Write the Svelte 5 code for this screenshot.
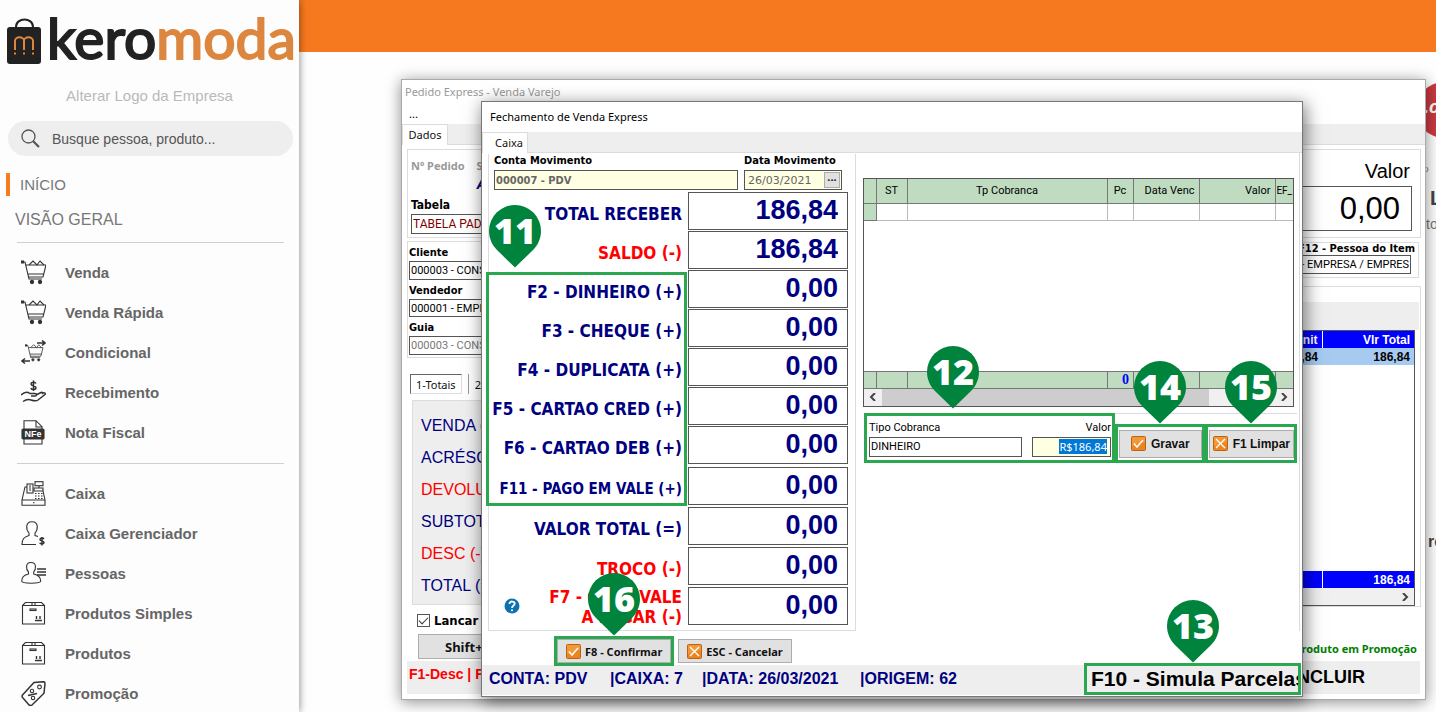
<script>
	const cart = '<path d="M0 2h4l4 17h13M5 5h20l-3 12H8M7 14h16"/><path d="M8 5l4-4 4 4 3-4 4 4"/><path d="M0 2h3" stroke-width="3"/><circle cx="11" cy="22" r="1.6" fill="#333"/><circle cx="19" cy="22" r="1.6" fill="#333"/>';
	const box = '<path d="M1.5 4.5h22V23h-22zM1.5 4.500l3-3h16l3 3M11 1.500v3M14 1.500v3"/><rect x="9" y="8" width="6" height="1.500"/><path d="M14 19.500h7M15.500 18v-3M19 18v-3" stroke-width="1.400"/>';
	const icons = {
		cart,
		swap: '<g transform="translate(4 4) scale(.72)">' + cart + '</g><path d="M16 3h8M21 .5L24 3l-3 2.500M9 21H1M4 18.500L1 21l3 2.500" stroke-width="1.600"/>',
		hand: '<path d="M15 3.500c-1-2-5-1.500-5 .6 0 2.400 5 1.200 5 3.700 0 2.200-4 2.500-5.200.3M12.500.5v10.500" stroke-width="1.500"/><path d="M0 15c4-4 7-3 9-1.500h5c2 0 2 2.500 0 2.500h-4M15 15l5-2.500c1.500-.6 2 .7 1 1.500M21 13.500c2-1.500 4-.5 3 1L17 20c-2 1.500-4 1-7 0-3-1-5-.5-8 1.500" stroke-width="1.500"/>',
		nfe: '<path d="M3 10V.7h12l6 6V10M15 1v6h6M3 19v5h18v-5"/><rect x="1" y="9" width="22" height="10" rx="1" fill="#333"/><text x="12" y="17" font-family="Liberation Sans, sans-serif" font-size="9" font-weight="bold" text-anchor="middle" fill="#fff" stroke="none">NFe</text>',
		till: '<path d="M1 19l3-13h2M22 10l2 9M1 19h23v5.300H1zM12 21.700h1.500"/><rect x="6" y="3" width="6" height="9"/><path d="M8 5h2M8 7h2M8 9h2"/><rect x="14" y=".7" width="8" height="4"/><path d="M18 5v2M13 7h9v3h-9z"/><path d="M14 12.500h9M14 15h9M14 17.500h9" stroke-dasharray="1.500 1.500"/>',
		cashier: '<path d="M11 .7c-7 0-6 8-3 11.300v2.500C3 16 1 18 1 23.500h14M11 .7c7 0 6 8 3 11.300v2.500l3 1"/><path d="M23 18c-1-1.500-4-1.200-4 .5 0 2 4 1 4 3 0 1.800-3.500 2-4.300.2M21 16v8.500" stroke-width="1.500"/>',
		people: '<path d="M10 1.500c-6 0-5 7-2.500 9.500v2C3 14 .7 16 .7 20c0 3 19 3 19 0 0-4-2.700-6-7-7v-2C15 8.500 16 1.500 10 1.500z"/><path d="M16 8h9M16 11h9M16 14h9" stroke-width="1.700"/>',
		box,
		tag: '<path d="M1.500 14L13 1.500l9.500-.8c1.200 0 1.500.5 1.500 1.500l-1 10L11 24c-1 .8-2 .6-3 0l-6-7c-1-1-1.200-2-.5-3z" stroke-width="1.500"/><circle cx="18.500" cy="6" r="1.900"/><circle cx="11" cy="10" r="1.700"/><circle cx="12" cy="17" r="1.700"/><path d="M7 14.500l9-2" stroke-width="1.500"/>'
	};

	const sales = [
		{ icon: 'cart', text: 'Venda' },
		{ icon: 'cart', text: 'Venda Rápida' },
		{ icon: 'swap', text: 'Condicional' },
		{ icon: 'hand', text: 'Recebimento' },
		{ icon: 'nfe', text: 'Nota Fiscal' }
	];
	const registers = [
		{ icon: 'till', text: 'Caixa' },
		{ icon: 'cashier', text: 'Caixa Gerenciador' },
		{ icon: 'people', text: 'Pessoas' },
		{ icon: 'box', text: 'Produtos Simples' },
		{ icon: 'box', text: 'Produtos' },
		{ icon: 'tag', text: 'Promoção' }
	];

	// each group is one block of rows in the payment form
	const groups = [
		{
			rows: [
				{ id: 'receber', label: 'TOTAL RECEBER', value: '186,84' },
				{ id: 'saldo', label: 'SALDO (-)', value: '186,84', red: true }
			]
		},
		{
			pin: '11',
			rows: [
				{ id: 'f2', label: 'F2 - DINHEIRO (+)', value: '0,00' },
				{ id: 'f3', label: 'F3 - CHEQUE (+)', value: '0,00' },
				{ id: 'f4', label: 'F4 - DUPLICATA (+)', value: '0,00' },
				{ id: 'f5', label: 'F5 - CARTAO CRED (+)', value: '0,00' },
				{ id: 'f6', label: 'F6 - CARTAO DEB (+)', value: '0,00' },
				{ id: 'f11', label: 'F11 - PAGO EM VALE (+)', value: '0,00', small: true }
			]
		},
		{
			rows: [
				{ id: 'total', label: 'VALOR TOTAL (=)', value: '0,00' },
				{ id: 'troco', label: 'TROCO (-)', value: '0,00', red: true },
				{ id: 'f7', label: 'F7 - GERA VALE A PAGAR (-)', value: '0,00', red: true, help: true }
			]
		}
	];

	const totals = [
		{ text: 'VENDA (+)' },
		{ text: 'ACRÉSCIMO (+)' },
		{ text: 'DEVOLUÇÃO (-)', red: true },
		{ text: 'SUBTOTAL (=)' },
		{ text: 'DESC (-)', red: true },
		{ text: 'TOTAL  (=)' }
	];
</script>

{#snippet pin(number)}
	<svg class="pin" width="52" height="63" viewBox="0 0 52 63">
		<path d="M26 62.500L8 45C3 40 0 33 0 26a26 26 0 0 1 52 0c0 7-3 14-8 19z" fill="#00833c" />
		<text x="26" y="39" text-anchor="middle">{number}</text>
	</svg>
{/snippet}

{#snippet mark(kind)}
	<svg width="15" height="15" viewBox="0 0 15 15">
		<rect x=".5" y=".5" width="14" height="14" rx="1" fill="#ec8420" stroke="#b96412" />
		<path d="M1 1h13v5L1 10z" fill="#f6a54a" opacity=".6" />
		{#if kind == 'ok'}
			<path d="M3 7.500l3 3.500 6-7" fill="none" stroke="#fff" stroke-width="1.500" />
		{:else}
			<path d="M3 3l9 9M12 3l-9 9" fill="none" stroke="#fff" stroke-width="1.300" />
		{/if}
	</svg>
{/snippet}

{#snippet menu(items)}
	<ul class="menu">
		{#each items as item}
			<li>
				<a href="#{item.icon}">
					<svg width="25" height="25" viewBox="0 0 25 25" fill="none" stroke="#333" stroke-width="1.100">{@html icons[item.icon]}</svg>
					{item.text}
				</a>
			</li>
		{/each}
	</ul>
{/snippet}

<div class="page">
	<nav class="sidebar">
		<div class="logo">
			<svg width="35" height="47" viewBox="0 0 35 47">
				<path d="M9 12V9c0-10 17-10 17 0v3" fill="none" stroke="#222" stroke-width="2" />
				<rect x="0" y="9" width="34" height="37" rx="3" fill="#222" />
				<path d="M8 32V23c0-5 9-5 9 0v9M17 23c0-5 9-5 9 0v9" fill="none" stroke="#dc863f" stroke-width="2" />
				<path d="M7 35.500h2M16 35.500h2M25 35.500h2" stroke="#dc863f" stroke-width="2" />
			</svg>
			<span class="brand">kero<b>moda</b></span>
		</div>
		<a class="change" href="#logo">Alterar Logo da Empresa</a>
		<label class="search">
			<svg width="20" height="20" viewBox="0 0 20 20" fill="none" stroke="#555"><circle cx="7.500" cy="7.500" r="6.500" stroke-width="1.300" /><path d="M12 12l6 6" stroke-width="2.200" /></svg>
			<input type="text" placeholder="Busque pessoa, produto..." aria-label="Busque pessoa, produto...">
		</label>
		<a class="home" href="#inicio">INÍCIO</a>
		<h2>VISÃO GERAL</h2>
		{@render menu(sales)}
		{@render menu(registers)}
	</nav>

	<main>
		<div class="topbar"></div>

		<div class="behind">
			<div class="ball"><i>.co</i></div>
			<p class="degree">º</p>
			<p class="big">LO</p>
			<p class="small">tos</p>
			<p class="low">re</p>
		</div>

		<section class="window order">
			<header>Pedido Express - Venda Varejo</header>
			<div class="dots">...</div>
			<div class="tabs"><button>Dados</button></div>
			<div class="order-body">
				<div class="box top-box">
					<div class="col">
						<p class="pedido"><span>Nº Pedido</span><span>Status</span></p>
						<p class="state">ABERTO</p>
						<label for="tabela" class="wide">Tabela</label>
						<input id="tabela" class="maroon" value="TABELA PADRAO">
					</div>
					<div class="col price">
						<label for="valor">Valor</label>
						<input id="valor" value="0,00">
					</div>
				</div>
				<div class="columns">
					<div class="left">
						<div class="box people">
							<label for="cliente">Cliente</label>
							<input id="cliente" value="000003 - CONSUMIDOR">
							<label for="vendedor">Vendedor</label>
							<input id="vendedor" value="000001 - EMPRESA">
							<label for="guia">Guia</label>
							<input id="guia" value="000003 - CONSUMIDOR" disabled>
						</div>
						<div class="subtabs"><button class="on">1-Totais</button><button>2-Outros</button></div>
						<div class="totals">
							{#each totals as total}
								<p class:red={total.red}>{total.text}</p>
							{/each}
						</div>
						<label class="check"><input type="checkbox" checked>Lancar Item</label>
						<button class="shift">Shift+F1</button>
					</div>
					<div class="right">
						<div class="box person">
							<label for="pessoa">F12 - Pessoa do Item</label>
							<input id="pessoa" value="000001 - EMPRESA / EMPRES">
						</div>
						<div class="box items">
							<div class="strip"></div>
							<div class="sheet">
								<table>
									<thead><tr><th>Vlr Unit</th><th>Vlr Total</th></tr></thead>
									<tbody>
										<tr><td>186,84</td><td>186,84</td></tr>
										<tr class="blank"><td colspan="2"></td></tr>
									</tbody>
									<tfoot><tr><td></td><td>186,84</td></tr></tfoot>
								</table>
								<div class="scroll"><span></span><svg width="8" height="8" viewBox="0 0 8 8"><path d="M2 0l4 4-4 4" /></svg></div>
							</div>
						</div>
						<p class="promo">Produto em Promoção</p>
					</div>
				</div>
			</div>
			<footer><span>F1-Desc | F2-Qtde</span><strong>INCLUIR</strong></footer>
		</section>

		<section class="window closing">
			<header>Fechamento de Venda Express</header>
			<div class="tabs"><button>Caixa</button></div>
			<div class="closing-body">
				<form class="form" on:submit|preventDefault>
					<div class="heads">
						<div class="account">
							<label for="conta">Conta Movimento</label>
							<input id="conta" value="000007 - PDV">
						</div>
						<div class="date">
							<label for="data">Data Movimento</label>
							<div class="picker"><input id="data" value="26/03/2021"><button type="button" aria-label="Data">···</button></div>
						</div>
					</div>
					{#each groups as group}
						<div class="group">
							{#each group.rows as row}
								<div class="row" class:red={row.red} class:two={row.help}>
									{#if row.help}
										<svg width="16" height="16" viewBox="0 0 16 16">
											<circle cx="8" cy="8" r="7.500" fill="#0d72b0" />
											<path d="M5.500 6c0-3.500 5.200-3 5.200-.3C10.700 7.500 8 7.500 8 10" fill="none" stroke="#fff" stroke-width="1.800" />
											<circle cx="8" cy="12.300" r="1.100" fill="#fff" />
										</svg>
									{/if}
									<label for={row.id} class:small={row.small}>{row.label}</label>
									<input id={row.id} value={row.value}>
								</div>
							{/each}
							{#if group.pin}
								<div class="frame">{@render pin(group.pin)}</div>
							{/if}
						</div>
					{/each}
				</form>

				<div class="payments">
					<div class="grid">
						<table>
							<colgroup><col class="c-mark"><col class="c-st"><col><col class="c-pc"><col class="c-date"><col class="c-value"><col class="c-ef"></colgroup>
							<thead>
								<tr><th></th><th>ST</th><th>Tp Cobranca</th><th>Pc</th><th class="end">Data Venc</th><th class="end">Valor</th><th class="cut">EF_</th></tr>
							</thead>
							<tbody>
								<tr><td class="mark-cell"></td><td></td><td></td><td></td><td></td><td></td><td></td></tr>
								<tr class="blank"><td colspan="7"></td></tr>
							</tbody>
							<tfoot>
								<tr><td></td><td></td><td></td><td class="count">0</td><td></td><td></td><td></td></tr>
							</tfoot>
						</table>
						<div class="scroll">
							<svg width="8" height="8" viewBox="0 0 8 8"><path d="M6 0L2 4l4 4" /></svg>
							<span></span>
							<svg width="8" height="8" viewBox="0 0 8 8"><path d="M2 0l4 4-4 4" /></svg>
						</div>
					</div>
					<div class="entry">
						<div class="marked kind">
							<div>
								<label for="tipo">Tipo Cobranca</label>
								<input id="tipo" value="DINHEIRO">
							</div>
							<div class="amount">
								<label for="quantia">Valor</label>
								<div class="field"><output id="quantia">R$186,84</output></div>
							</div>
							{@render pin('12')}
						</div>
						<div class="marked"><button>{@render mark('ok')}Gravar</button>{@render pin('14')}</div>
						<div class="marked"><button>{@render mark('no')}F1 Limpar</button>{@render pin('15')}</div>
					</div>
				</div>
			</div>
			<div class="actions">
				<div class="marked"><button>{@render mark('ok')}F8 - Confirmar</button>{@render pin('16')}</div>
				<button>{@render mark('no')}ESC - Cancelar</button>
			</div>
			<footer>
				<span class="conta">CONTA: PDV</span>
				<span class="caixa">|CAIXA: 7</span>
				<span class="data">|DATA: 26/03/2021</span>
				<span>|ORIGEM: 62</span>
				<div class="marked simulate"><span>F10 - Simula Parcelas</span>{@render pin('13')}</div>
			</footer>
		</section>
	</main>
</div>

<style>
	:global(body) {
		background: #fefefe;
		overflow: hidden;
	}

	* {
		box-sizing: border-box;
	}

	p, h2, ul {
		margin: 0;
		padding: 0;
	}

	.page {
		display: flex;
		height: 100vh;
		font-family: "Liberation Sans", Arial, sans-serif;
	}

	/* sidebar */
	.sidebar {
		position: relative;
		z-index: 1;
		flex: none;
		width: 299px;
		background: #fdfdfd;
		box-shadow: 0 0 8px rgba(0, 0, 0, .5);
	}

	.logo {
		display: flex;
		align-items: flex-end;
		gap: 5px;
		height: 65px;
		padding-left: 7px;
	}

	.brand {
		font-family: Lato, "Open Sans", sans-serif;
		font-size: 57px;
		line-height: 56px;
		color: #222;
		-webkit-text-stroke: 2px;
		stroke-linejoin: round;
	}

	.brand b {
		font-weight: normal;
		color: #dc863f;
	}

	.change {
		display: block;
		margin-top: 21px;
		text-align: center;
		font-size: 15px;
		line-height: 20px;
		color: #b9b9b9;
		text-decoration: none;
	}

	.search {
		display: flex;
		align-items: center;
		gap: 11px;
		height: 35px;
		margin: 15px 6px 0 8px;
		padding-left: 13px;
		border-radius: 18px;
		background: #eee;
	}

	.search input {
		flex: 1;
		min-width: 0;
		border: 0;
		padding: 0;
		background: none;
		font: 14px "Liberation Sans", Arial, sans-serif;
	}

	.search input::placeholder {
		color: #555;
	}

	.home {
		display: block;
		margin: 17px 0 0 6px;
		padding-left: 10px;
		border-left: 4px solid #f57c20;
		font-size: 15px;
		line-height: 23px;
		color: #777;
		text-decoration: none;
	}

	h2 {
		margin-top: 13px;
		padding-left: 15px;
		font-size: 16px;
		font-weight: normal;
		line-height: 22px;
		color: #777;
	}

	.menu {
		list-style: none;
		margin: 11px 15px 0 17px;
		padding-top: 9px;
		border-top: 1px solid #d0d0d0;
	}

	.menu a {
		display: flex;
		align-items: center;
		gap: 19px;
		height: 40px;
		padding-left: 4px;
		font-size: 15px;
		font-weight: bold;
		color: #666;
		text-decoration: none;
	}

	.menu + .menu {
		margin-top: 11px;
	}

	/* desktop */
	main {
		position: relative;
		flex: 1;
		min-width: 0;
	}

	.topbar {
		height: 52px;
		background: #f7791f;
	}

	.behind {
		position: absolute;
		top: 82px;
		right: 0;
		width: 12px;
		overflow: hidden;
		color: #777;
	}

	.ball {
		width: 56px;
		height: 56px;
		margin-left: -8px;
		padding: 15px 0 0 8px;
		border-radius: 50%;
		background: #c93a40;
		color: #fff;
		font-size: 18px;
		font-weight: bold;
	}

	.degree {
		padding-top: 24px;
		font-size: 12px;
		line-height: 20px;
	}

	.big {
		padding-left: 6px;
		font-size: 20px;
		font-weight: bold;
		line-height: 32px;
		color: #444;
	}

	.small {
		padding-left: 2px;
		font-size: 14px;
		line-height: 20px;
	}

	.low {
		padding: 298px 0 0 4px;
		font-size: 16px;
		font-weight: bold;
		line-height: 20px;
		color: #444;
	}

	.window {
		position: absolute;
		border: 1px solid #777;
		background: #fff;
		font-family: "Noto Sans", "Open Sans", sans-serif;
		font-size: 11px;
	}

	.window input {
		border: 1px solid #555;
		border-radius: 0;
		padding: 0 1px;
		background: #fff;
		font: 12px Roboto, "Open Sans", sans-serif;
	}

	.window button {
		border: 1px solid #adadad;
		border-radius: 0;
		padding: 0;
		background: #e1e1e1;
		font: bold 11px "Noto Sans", "Open Sans", sans-serif;
		color: #111;
	}

	.tabs {
		display: flex;
		height: 21px;
		border-bottom: 1px solid #dcdcdc;
		background: #eee;
	}

	.window .tabs button {
		height: 21px;
		padding-bottom: 2px;
		border: 1px solid #dcdcdc;
		border-bottom: 0;
		background: #fff;
		font-weight: normal;
	}

	.scroll {
		display: flex;
		align-items: center;
		height: 17px;
		background: #f0f0f0;
	}

	.scroll svg {
		flex: none;
		margin: 0 5px;
		fill: none;
		stroke: #444;
		stroke-width: 2;
	}

	table {
		width: 100%;
		border-collapse: collapse;
		table-layout: fixed;
	}

	/* order window */
	.order {
		top: 79px;
		left: 102px;
		right: 10px;
		border-color: #aaa;
		box-shadow: 0 2px 14px rgba(0, 0, 0, .45);
	}

	.order header {
		padding-left: 3px;
		line-height: 24px;
		color: #999;
	}

	.dots {
		height: 20px;
		padding-left: 7px;
		line-height: 20px;
	}

	.order .tabs button {
		width: 46px;
	}

	.order-body {
		padding: 4px 4px 0 5px;
	}

	.order label {
		font: bold 11px "DejaVu Sans Condensed", "Noto Sans", sans-serif;
	}

	.box {
		border: 1px solid #dcdcdc;
	}

	.top-box {
		display: flex;
		justify-content: space-between;
		height: 89px;
		padding: 8px 8px 0 3px;
	}

	.col {
		display: flex;
		flex-direction: column;
		width: 200px;
	}

	.pedido {
		display: flex;
		gap: 12px;
		line-height: 16px;
		font-weight: bold;
		color: #999;
	}

	.state {
		padding-left: 66px;
		font-size: 14px;
		font-style: italic;
		font-weight: bold;
		line-height: 19px;
		color: #000080;
	}

	.order .wide {
		padding-top: 3px;
		line-height: 18px;
		font-size: 12px;
	}

	.window .maroon {
		height: 20px;
		font-size: 12px;
		color: #800000;
	}

	.order .price label {
		padding: 1px 2px 0 0;
		font: 20px/24px "Liberation Sans", Arial, sans-serif;
		text-align: right;
	}

	.window .price input {
		width: 100%;
		height: 45px;
		padding-right: 11px;
		margin-top: 3px;
		font: 31px "Liberation Sans", Arial, sans-serif;
		text-align: right;
	}

	.columns {
		display: flex;
		justify-content: space-between;
		margin-top: 3px;
	}

	.left, .right {
		display: flex;
		flex-direction: column;
		width: 260px;
	}

	.people {
		display: flex;
		flex-direction: column;
		height: 117px;
		padding: 2px 2px 0 1px;
	}

	.order .people label {
		line-height: 17px;
	}

	.order .people input {
		height: 19px;
		margin-bottom: 2px;
		font-size: 11px;
	}

	.people input:disabled {
		color: #777;
	}

	.subtabs {
		display: flex;
		gap: 6px;
		margin: 16px 0 0 3px;
	}

	.window .subtabs button {
		height: 20px;
		padding: 0 6px;
		border: 0;
		border-left: 1px solid #999;
		background: none;
		font-weight: normal;
	}

	.window .subtabs .on {
		padding: 0 5px;
		border: 1px solid #ddd;
		border-top-color: #666;
		border-left-color: #666;
	}

	.totals {
		margin: 6px 0 0 5px;
		padding: 9px 8px 2px;
		border: 1px solid #dcdcdc;
		background: #eee;
		font: 16px/32px "Liberation Sans", Arial, sans-serif;
		color: #000080;
	}

	.totals .red {
		color: #f00;
	}

	.order .check {
		display: flex;
		align-items: center;
		gap: 4px;
		height: 24px;
		margin: 3px 0 0 10px;
		font-size: 13px;
	}

	.window .check input {
		width: 13px;
		height: 13px;
		margin: 0;
		padding: 0;
		appearance: none;
	}

	.check input:checked::before {
		content: '';
		display: block;
		width: 8px;
		height: 4px;
		margin: 2px 0 0 1px;
		border: solid #333;
		border-width: 0 0 1px 1px;
		transform: rotate(-45deg);
	}

	.window .shift {
		height: 25px;
		margin: 2px 0 0 11px;
		padding-left: 26px;
		font-size: 13px;
		text-align: left;
	}

	.person {
		display: flex;
		flex-direction: column;
		height: 36px;
		margin: 1px 2px 8px 0;
		text-align: right;
	}

	.order .person label {
		padding-right: 3px;
		line-height: 12px;
	}

	.order .person input {
		height: 19px;
		margin-right: 7px;
		font-size: 11px;
		text-align: right;
	}

	.items {
		padding: 15px 1px 0 0;
	}

	.strip {
		height: 28px;
		background: #eee;
	}

	.sheet {
		margin-right: 4px;
		border: 1px solid #555;
		font: bold 12px "Liberation Sans", Arial, sans-serif;
		text-align: right;
	}

	.sheet th, .sheet td {
		height: 17px;
		padding: 0 4px;
		text-align: right;
	}

	.sheet th + th, .sheet tfoot td + td {
		width: 92px;
		border-left: 1px solid #fff;
	}

	.sheet tr {
		background: #a6caf0;
	}

	.sheet thead tr, .sheet tfoot tr {
		background: #00f;
		color: #fff;
	}

	.sheet .blank {
		height: 206px;
		background: #fff;
	}

	.sheet .scroll {
		justify-content: space-between;
	}

	.promo {
		margin-top: 34px;
		padding-right: 4px;
		font-weight: bold;
		line-height: 16px;
		text-align: right;
		color: #008000;
	}

	.order footer {
		display: flex;
		justify-content: space-between;
		margin: 2px 5px 5px;
		padding: 0 55px 3px 2px;
		background: #eee;
		font: bold 14px/27px "Liberation Sans", Arial, sans-serif;
		color: #f00;
	}

	.order footer strong {
		padding-top: 3px;
		font-size: 18px;
		color: #000;
	}

	/* closing window */
	.closing {
		top: 101px;
		left: 182px;
		right: 133px;
		box-shadow: 2px 4px 16px 1px rgba(0, 0, 0, .5);
	}

	.closing header {
		padding-left: 8px;
		line-height: 30px;
	}

	.closing .tabs button {
		width: 46px;
		padding-left: 8px;
	}

	.closing-body {
		display: flex;
		gap: 7px;
		margin-right: 2px;
		padding: 1px 5px 0 6px;
		border-right: 1px solid #dcdcdc;
	}

	.form {
		width: 368px;
		height: 477px;
		padding: 0 7px 0 5px;
		border: solid #dcdcdc;
		border-width: 0 1px 1px;
	}

	.heads {
		display: flex;
		gap: 6px;
		padding-right: 6px;
		margin-bottom: 2px;
	}

	.account {
		flex: 1;
	}

	.heads label {
		display: block;
		height: 16px;
		font: bold 11px/13px "DejaVu Sans Condensed", "Noto Sans", sans-serif;
		color: #000;
	}

	.heads input {
		width: 100%;
		height: 20px;
		background: #ffffe1;
		color: #666;
		vertical-align: top;
	}

	.account input {
		font: bold 11px "DejaVu Sans Condensed", "Noto Sans", sans-serif;
	}

	.date {
		width: 98px;
	}

	.picker {
		display: flex;
		border: 1px solid #555;
		background: #ffffe1;
	}

	.picker input {
		flex: 1;
		width: 0;
		height: 18px;
		padding-left: 3px;
		border: 0;
		font: 11px "DejaVu Sans", sans-serif;
	}

	.picker button {
		width: 16px;
		margin: 1px;
		line-height: 10px;
	}

	.group {
		position: relative;
		display: grid;
		grid-template-columns: minmax(0, 1fr);
		gap: 1px;
		margin-bottom: 1px;
	}

	.group:last-child {
		gap: 2px;
		margin-top: 2px;
	}

	.row {
		display: flex;
		align-items: center;
		justify-content: flex-end;
		gap: 6px;
		color: #000080;
	}

	.row:nth-child(6) {
		margin-top: 2px;
	}

	.row label {
		padding-top: 6px;
		font: bold 17px/20px "DejaVu Sans Condensed", "Noto Sans", sans-serif;
		text-align: right;
		white-space: nowrap;
	}

	.row .small {
		padding-left: 0;
		font-size: 15px;
	}

	.row input {
		flex: none;
		width: 160px;
		height: 38px;
		padding: 0 9px 1px 0;
		font: bold 27px "Liberation Sans", Arial, sans-serif;
		text-align: right;
		color: #000080;
	}

	.red {
		color: #f00;
	}

	.two svg {
		margin-right: 14px;
	}

	.two label {
		width: 142px;
		margin: -2px 0;
		padding-top: 2px;
		white-space: normal;
	}

	.frame {
		position: absolute;
		top: 2px;
		bottom: -1px;
		left: -8px;
		width: 201px;
		border: 3px solid #2ba84f;
		pointer-events: none;
	}

	.pin {
		position: absolute;
		z-index: 2;
		bottom: calc(100% + 3px);
		left: calc(50% - 26px);
		fill: #fff;
		font: 800 36px "Open Sans", "Noto Sans", sans-serif;
	}

	.frame .pin {
		bottom: calc(100% + 7px);
		left: 0;
	}

	.marked {
		position: relative;
		border: 3px solid #2ba84f;
	}

	.payments {
		flex: 1;
		min-width: 0;
		padding-top: 24px;
	}

	.grid {
		border: 1px solid #555;
		font: 11px Roboto, "Liberation Sans", sans-serif;
	}

	.c-mark { width: 12px; }
	.c-st { width: 31px; }
	.c-pc { width: 26px; }
	.c-date { width: 66px; }
	.c-value { width: 76px; }
	.c-ef { width: 18px; }

	.grid th, .grid td {
		padding: 0;
		border-right: 1px solid #bbb;
		border-bottom: 1px solid #bbb;
		overflow: hidden;
		white-space: nowrap;
	}

	.grid th, .grid .mark-cell, .grid tfoot td {
		border-color: #777;
		background: #c0dcc0;
		font-weight: normal;
	}

	.grid tr > :last-child {
		border-right: 0;
	}

	.grid th { height: 24px; }
	.grid td { height: 17px; }

	.grid .end {
		padding-right: 4px;
		text-align: right;
	}

	.grid .cut {
		font-size: 10px;
	}

	.grid .blank td {
		height: 151px;
		border-bottom-color: #777;
	}

	.grid .count {
		padding-left: 11px;
		font: bold 14px/16px "Liberation Serif", serif;
		color: #00f;
		text-align: center;
	}

	.grid .scroll span {
		flex: 1;
		height: 100%;
		margin-right: 66px;
		background: #cdcdcd;
	}

	.entry {
		display: flex;
		align-items: flex-end;
		margin: 6px -3px 0 1px;
		border-top: 1px solid #dcdcdc;
	}

	.kind {
		display: flex;
		flex: 1;
		gap: 10px;
		min-width: 0;
		height: 50px;
		margin-top: -1px;
		padding: 3px 1px 0 2px;
	}

	.kind > div {
		flex: 1;
		min-width: 0;
	}

	.kind .amount {
		flex: 0 0 79px;
		text-align: right;
	}

	.kind label {
		display: block;
		font: 11px/18px Roboto, "Open Sans", sans-serif;
	}

	.kind input {
		width: 100%;
		height: 20px;
	}

	.closing .kind input {
		font-size: 11px;
	}

	.field {
		height: 20px;
		padding: 1px 3px;
		border: 1px solid #555;
		background: #ffffe1;
	}

	.field output {
		display: inline-block;
		background: #0078d7;
		line-height: 15px;
		color: #fff;
	}

	.kind .pin {
		bottom: calc(100% + 7px);
		left: 60px;
	}

	.entry .marked button {
		display: flex;
		align-items: center;
		gap: 5px;
		height: 28px;
		margin: 3px 0 2px 1px;
		padding: 0 11px;
		font: bold 12px "Liberation Sans", Arial, sans-serif;
	}

	.entry .marked:last-child button {
		padding: 0 3px;
	}

	.actions {
		display: flex;
		align-items: center;
		gap: 4px;
		margin: 5px 0 0 72px;
	}

	.actions button {
		display: flex;
		align-items: center;
		gap: 4px;
		height: 24px;
		padding: 0 8px;
		white-space: nowrap;
	}

	.closing footer {
		display: flex;
		align-items: center;
		margin: -1px 0 1px;
		padding-left: 7px;
		background: #eee;
		font: bold 16px/24px "Liberation Sans", Arial, sans-serif;
		color: #000080;
	}

	.closing footer > span {
		padding-bottom: 2px;
	}

	.conta { width: 121px; }
	.caixa { width: 92px; }
	.data { width: 158px; }

	.simulate {
		width: 217px;
		height: 32px;
		margin: -2px 1px 0 auto;
		padding-left: 4px;
		font-size: 21px;
		line-height: 25px;
		color: #000;
	}

	.simulate > span {
		display: block;
		overflow: hidden;
		white-space: nowrap;
	}
</style>
